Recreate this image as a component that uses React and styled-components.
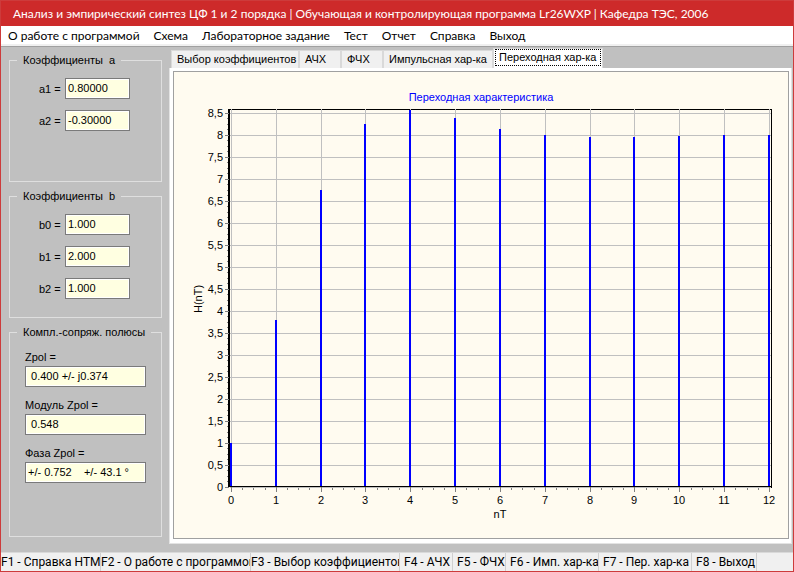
import styled, { createGlobalStyle } from 'styled-components'
import { useState } from 'react'

const GlobalStyle = createGlobalStyle`
*{
    box-sizing:border-box;
}
body{
    margin:0;
    background-color:#c0c0c0;
}
`
const Window = styled.div`
display:flex;
flex-direction:column;
min-height:100vh;
border:1px solid #cd3b3b;
background-color:#c0c0c0;
color:#000000;
font-family:"Liberation Sans", sans-serif;
font-size:11px;
overflow:hidden;
`
const TitleBar = styled.header`
display:flex;
align-items:center;
height:25px;
padding-left:12px;
background-color:#cd2a2a;
color:white;
`
const Title = styled.h1`
margin:0;
font-family:Lato, sans-serif;
font-size:12px;
font-weight:400;
line-height:16px;
white-space:nowrap;
`
const MenuBar = styled.nav`
display:flex;
height:21px;
background-color:white;
border-bottom:1px solid #a0a0a0;
box-shadow:inset 0 -2px 0 #f0f0f0;
`
const MenuItem = styled.button`
padding:0 7px;
border:none;
background:none;
font-family:Lato, sans-serif;
font-size:12px;
line-height:18px;
white-space:nowrap;
&:hover{
    background-color:#e5f3ff;
}
`
const Main = styled.main`
display:flex;
flex:1;
`
const Sidebar = styled.aside`
display:flex;
flex-direction:column;
gap:8px;
width:168px;
flex-shrink:0;
padding:7px 7px 15px 8px;
`
const Group = styled.fieldset`
display:flex;
flex-direction:column;
gap:11px;
min-width:0;
min-height:128px;
flex:${props => props.$grow ? 1 : 'none'};
margin:0;
padding:${props => props.$grow ? '11px 15px' : '11px 29px'};
border:1px solid #dfdfdf;
`
const Legend = styled.legend`
margin-left:${props => props.$indent || 0}px;
padding:0 6px;
line-height:13px;
white-space:pre;
`
const Field = styled.div`
display:flex;
align-items:center;
gap:5px;
`
const StackedField = styled.div`
display:flex;
flex-direction:column;
label{
    line-height:14px;
    padding-bottom:2px;
}
`
const Label = styled.label`
width:21px;
line-height:16px;
white-space:nowrap;
`
const Input = styled.input`
width:${props => props.$wide ? '100%' : '65px'};
height:21px;
padding:0 2px 2px;
border:1px solid #7a7a7a;
outline:none;
background-color:#ffffe1;
box-shadow:inset 0 0 0 1px white;
font-family:"Liberation Sans", sans-serif;
font-size:11px;
`
const Workspace = styled.section`
display:flex;
flex-direction:column;
flex:1;
min-width:0;
padding:1px 1px 8px 0;
`
const Tabs = styled.div`
display:flex;
align-items:flex-end;
height:20px;
padding-left:2px;
`
const Tab = styled.button`
width:${props => props.$width}px;
height:${props => props.$active ? 20 : 18}px;
padding:${props => props.$active ? '0 1px 2px' : '0 1px'};
border:1px solid #d9d9d9;
border-bottom:none;
background-color:${props => props.$active ? 'white' : '#f0f0f0'};
font-family:"Liberation Sans", sans-serif;
font-size:11px;
line-height:15px;
text-align:left;
white-space:nowrap;
span{
    display:block;
    padding-left:3px;
    border:1px dotted ${props => props.$active ? 'black' : 'transparent'};
}
`
const TabPage = styled.div`
flex:1;
padding:3px 2px 4px 3px;
border:1px solid #e3e3e3;
border-top:none;
background-color:white;
`
const ChartFrame = styled.div`
border:1px solid #a0a0a0;
background-color:#fffbf0;
`
const Svg = styled.svg`
display:block;
width:100%;
height:auto;
font-family:"Liberation Sans", sans-serif;
font-size:11px;
`
const StatusBar = styled.footer`
display:flex;
height:19px;
background-color:#f0f0f0;
border-top:1px solid #d9d9d9;
`
const StatusCell = styled.div`
width:${props => props.$width}px;
flex-shrink:0;
padding-left:${props => props.$pad}px;
border-right:1px solid #d0d0d0;
font-family:Roboto, sans-serif;
font-size:12px;
line-height:19px;
white-space:nowrap;
overflow:hidden;
`

const menu = ['О работе с программой', 'Схема', 'Лабораторное задание', 'Тест', 'Отчет', 'Справка', 'Выход']

const tabs = [
    { name: 'Выбор коэффициентов', width: 128 },
    { name: 'АЧХ', width: 42 },
    { name: 'ФЧХ', width: 42 },
    { name: 'Импульсная хар-ка', width: 110 },
    { name: 'Переходная хар-ка', width: 110 },
]

const status = [
    { text: 'F1 - Справка HTML', width: 100, pad: 0 },
    { text: 'F2 - О работе с программой', width: 150, pad: 0 },
    { text: 'F3 - Выбор коэффициентов', width: 149, pad: 0 },
    { text: 'F4 - АЧХ', width: 53, pad: 4 },
    { text: 'F5 - ФЧХ', width: 53, pad: 4 },
    { text: 'F6 - Имп. хар-ка', width: 93, pad: 4 },
    { text: 'F7 - Пер. хар-ка', width: 93, pad: 4 },
    { text: 'F8 - Выход', width: 65, pad: 4 },
]

// y[n] = a1*y[n-1] + a2*y[n-2] + b0*x[n] + b1*x[n-1] + b2*x[n-2], unit step on the input
const stepResponse = (a, b, count) => {
    const y = []
    for (let n = 0; n < count; n++) {
        const input = b.slice(0, n + 1).reduce((sum, k) => sum + k, 0)
        y.push(a[0] * (y[n - 1] || 0) + a[1] * (y[n - 2] || 0) + input)
    }
    return y
}

const toX = n => 57 + Math.round(n * 44.83)
const toY = value => 415 - Math.round(value * 44)

function Chart({ data }) {
    const levels = Array.from({ length: 18 }, (_, i) => i / 2)
    const minorY = Array.from({ length: 68 }, (_, i) => i / 8)
    const minorX = Array.from({ length: 49 }, (_, i) => i / 4)
    return (
        <Svg viewBox="0 0 614 466" role="img" aria-label="Переходная характеристика">
            <text x="307" y="29" fill="#0000ff" textAnchor="middle">Переходная характеристика</text>
            <g shapeRendering="crispEdges">
                <rect x="54" y="37" width="544" height="1" />
                <rect x="597" y="37" width="1" height="379" />
                <rect x="54" y="37" width="2" height="378" />
                <rect x="54" y="414" width="544" height="1" />
                {minorY.map(v => <rect key={v} x="53" y={toY(v)} width="1" height="1" fill="#808080" />)}
                {minorX.map(n => <rect key={n} x={toX(n)} y="415" width="1" height="3" fill="#808080" />)}
                {levels.map(v => <rect key={v} x="56" y={toY(v)} width="541" height="1" fill="#c0c0c0" />)}
                {data.map((v, n) => <rect key={n} x={toX(n)} y="37" width="1" height="383" fill="#c0c0c0" />)}
                <rect x="56" y="414" width="542" height="1" />
                {levels.map(v => <rect key={v} x="51" y={toY(v)} width="4" height="1" fill="#808080" />)}
                {data.map((v, n) => <rect key={n} x={toX(n)} y="415" width="1" height="5" fill="#808080" />)}
                {data.map((v, n) => (
                    <rect key={n} x={toX(n) - 1} y={Math.max(toY(v), 38)} width="2" height={414 - Math.max(toY(v), 38)} fill="#0000ff" />
                ))}
            </g>
            {levels.map(v => <text key={v} x="49" y={toY(v) + 4} textAnchor="end">{String(v).replace('.', ',')}</text>)}
            {data.map((v, n) => <text key={n} x={toX(n)} y="432" textAnchor="middle">{n}</text>)}
            <text x="326" y="446" textAnchor="middle">nT</text>
            <text x="28" y="227" textAnchor="middle" transform="rotate(-90 28 227)">H(nT)</text>
        </Svg>
    )
}

function Coefficient({ name, value, onChange }) {
    return (
        <Field>
            <Label htmlFor={name}>{name} =</Label>
            <Input id={name} type={"text"} value={value} onChange={e => onChange(name, e.target.value)} />
        </Field>
    )
}

function Result({ id, label, value }) {
    return (
        <StackedField>
            <Label htmlFor={id}>{label}</Label>
            <Input id={id} type={"text"} $wide readOnly value={value} />
        </StackedField>
    )
}

export default function App() {
    const [active, setActive] = useState(4)
    const [coef, setCoef] = useState({ a1: '0.80000', a2: '-0.30000', b0: '1.000', b1: '2.000', b2: '1.000' })

    const handleChange = (name, value) => setCoef({ ...coef, [name]: value })
    const num = name => Number(coef[name]) || 0
    const data = stepResponse([num('a1'), num('a2')], [num('b0'), num('b1'), num('b2')], 13)

    return (
        <Window>
            <GlobalStyle />
            <TitleBar>
                <Title>Анализ и эмпирический синтез ЦФ 1 и 2 порядка | Обучающая и контролирующая программа Lr26WXP | Кафедра ТЭС, 2006</Title>
            </TitleBar>
            <MenuBar>
                {menu.map(item => <MenuItem key={item} type='button'>{item}</MenuItem>)}
            </MenuBar>
            <Main>
                <Sidebar>
                    <Group>
                        <Legend $indent={-22}>Коэффициенты  a</Legend>
                        {['a1', 'a2'].map(n => <Coefficient key={n} name={n} value={coef[n]} onChange={handleChange} />)}
                    </Group>
                    <Group>
                        <Legend $indent={-22}>Коэффициенты  b</Legend>
                        {['b0', 'b1', 'b2'].map(n => <Coefficient key={n} name={n} value={coef[n]} onChange={handleChange} />)}
                    </Group>
                    <Group $grow>
                        <Legend $indent={-8}>Компл.-сопряж. полюсы</Legend>
                        <Result id="zpol" label="Zpol =" value=" 0.400 +/- j0.374" />
                        <Result id="modulus" label="Модуль Zpol =" value=" 0.548" />
                        <Result id="phase" label="Фаза Zpol =" value="+/- 0.752    +/- 43.1 °" />
                    </Group>
                </Sidebar>
                <Workspace>
                    <Tabs role="tablist">
                        {tabs.map((tab, i) => (
                            <Tab key={tab.name} type='button' role="tab" aria-selected={i === active} $active={i === active} $width={tab.width} onClick={() => setActive(i)}>
                                <span>{tab.name}</span>
                            </Tab>
                        ))}
                    </Tabs>
                    <TabPage>
                        <ChartFrame>
                            <Chart data={data} />
                        </ChartFrame>
                    </TabPage>
                </Workspace>
            </Main>
            <StatusBar>
                {status.map(cell => <StatusCell key={cell.text} $width={cell.width} $pad={cell.pad}>{cell.text}</StatusCell>)}
            </StatusBar>
        </Window>
    )
}
